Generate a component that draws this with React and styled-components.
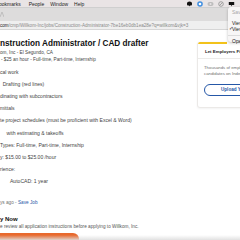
import React from "react";
import styled, { createGlobalStyle } from "styled-components";

const GlobalStyle = createGlobalStyle`
  html, body { margin: 0; padding: 0; background: #fff; }
  body { font-family: "Liberation Sans", Arial, sans-serif; overflow: hidden; }
`;

const Root = styled.div`
  position: relative;
  width: 240px;
  height: 240px;
  overflow: hidden;
  display: flex;
  flex-direction: column;
  &::after {
    content: "";
    position: absolute;
    left: 0;
    right: 0;
    bottom: 0;
    height: 5px;
    background: linear-gradient(to bottom, rgba(230,230,230,0), rgba(222,222,222,0.9));
    pointer-events: none;
  }
`;

const MenuBar = styled.div`
  height: 7px;
  flex-shrink: 0;
  background: #e9e4e5;
  display: flex;
  align-items: center;
  font-size: 5px;
  color: #1c1c1c;
  white-space: nowrap;
`;

const MenuItem = styled.span`
  margin-right: 6px;
  &:first-child { margin-left: -1px; margin-right: 8px; }
`;

const StatusIcons = styled.div`
  margin-left: auto;
  display: flex;
  align-items: center;
  gap: 4px;
  padding-right: 5px;
`;

const TabStrip = styled.div`
  height: 14px;
  flex-shrink: 0;
  background: #dddcdc;
  border-top: 1px solid #cfcfcf;
  box-sizing: border-box;
  display: flex;
  align-items: center;
`;

const UrlRow = styled.div`
  height: 9px;
  flex-shrink: 0;
  background: #efefef;
  border-bottom: 1px solid #d6d6d6;
  box-sizing: border-box;
  display: flex;
  align-items: center;
  font-size: 4.6px;
  color: #8a8a8a;
  white-space: nowrap;
`;

const Host = styled.span`
  color: #222;
`;

const Page = styled.div`
  flex: 1;
  display: flex;
  min-height: 0;
`;

const Main = styled.div`
  flex: 0 0 197px;
  padding-top: 9px;
  color: #444;
  white-space: nowrap;
`;

const Title = styled.h1`
  margin: 0;
  font-size: 8.2px;
  line-height: 10px;
  font-weight: 700;
  color: #111;
`;

const Meta = styled.div`
  font-size: 4.7px;
  line-height: 7px;
  padding-left: ${(p) => p.$indent || 0}px;
  margin-top: ${(p) => p.$gap || 0}px;
  color: ${(p) => p.$color || "#444"};
`;

const List = styled.div`
  margin-top: 2.5px;
`;

const Item = styled.div`
  font-size: 5.05px;
  line-height: 12.2px;
  padding-left: ${(p) => p.$indent || 0}px;
`;

const Link = styled.span`
  color: #2557a7;
`;

const ApplyHead = styled.div`
  margin-top: 9px;
  font-size: 6px;
  line-height: 8px;
  font-weight: 700;
  color: #111;
`;

const ApplyButton = styled.div`
  margin-top: 3.5px;
  width: 79px;
  height: 12px;
  background: #e8692d;
  border-radius: 0 6px 0 0;
`;

const Sidebar = styled.div`
  flex: 0 0 80px;
  padding-top: 12px;
`;

const Card = styled.div`
  position: relative;
  width: 70px;
  height: 66px;
  border: 1px solid #ebe9e7;
  border-top: none;
  border-radius: 3px;
  box-sizing: border-box;
  box-shadow: 0 0.5px 2px rgba(0,0,0,0.05);
  overflow: hidden;
`;

const CardAccent = styled.div`
  width: 29px;
  height: 2px;
  background: #f2c21b;
`;

const CardHead = styled.div`
  padding: 5px 0 0 7px;
  height: 14.5px;
  box-sizing: border-box;
  font-size: 4.4px;
  line-height: 6px;
  font-weight: 700;
  color: #222;
  border-bottom: 1px solid #ecebe9;
  white-space: nowrap;
`;

const CardText = styled.div`
  padding: 6.5px 0 0 6px;
  font-size: 4.3px;
  line-height: 6px;
  color: #6f6f6f;
  white-space: nowrap;
`;

const OutlineButton = styled.div`
  margin: 6.5px 0 0 6px;
  height: 12px;
  width: 70px;
  box-sizing: border-box;
  border: 1px solid #2557a7;
  border-radius: 6px;
  display: flex;
  align-items: center;
  padding-left: 16px;
  font-size: 4.6px;
  font-weight: 700;
  color: #2557a7;
  white-space: nowrap;
`;

const Dropdown = styled.div`
  position: absolute;
  left: 228px;
  top: 7px;
  width: 40px;
  height: 35px;
  background: #f7f6f6;
  border-radius: 3px;
  box-shadow: 0 1px 3px rgba(0,0,0,0.25);
  padding-top: 2px;
  box-sizing: border-box;
  font-size: 5px;
  color: #222;
`;

const DropItem = styled.div`
  height: ${(p) => p.$h || 6.5}px;
  line-height: ${(p) => p.$h || 6.5}px;
  padding-left: 4px;
  position: relative;
  color: ${(p) => (p.$muted ? "#a8a8a8" : "#222")};
`;

const Check = styled.span`
  position: absolute;
  left: 0.5px;
  font-size: 4.5px;
`;

const DropSep = styled.div`
  height: 1px;
  margin: 2px 0;
  background: #dcdcdc;
`;

function StatusGlyphs() {
  return (
    <StatusIcons>
      <svg width="7" height="6" viewBox="0 0 7 6">
        <path d="M1 2.2 Q1 0.6 3.5 0.6 Q6 0.6 6 2.2 L6 3.4 Q6 4.6 4 4.6 L3.5 5.6 L3 4.6 Q1 4.6 1 3.4 Z" fill="#111" />
      </svg>
      <svg width="6" height="6" viewBox="0 0 6 6">
        <circle cx="3" cy="3" r="2.8" fill="#3f8ee0" />
        <circle cx="3" cy="3" r="1.3" fill="#fff" />
      </svg>
      <svg width="7" height="6" viewBox="0 0 7 6">
        <rect x="0.5" y="1" width="6" height="4" rx="2" fill="#bdbdbd" />
        <circle cx="3.5" cy="3" r="1" fill="#e9e4e5" />
      </svg>
      <svg width="6" height="6" viewBox="0 0 6 6">
        <circle cx="3" cy="3" r="2.3" fill="none" stroke="#9a9a9a" strokeWidth="0.9" />
        <path d="M1.4 4.6 L4.6 1.4" stroke="#9a9a9a" strokeWidth="0.9" />
      </svg>
      <svg width="7" height="6" viewBox="0 0 7 6">
        <path d="M0.8 1 L6.2 1 L6.2 4 L4 4 L3.5 5.4 L3 4 L0.8 4 Z" fill="#111" />
      </svg>
    </StatusIcons>
  );
}

export default function App() {
  return (
    <>
      <GlobalStyle />
      <Root>
        <MenuBar>
          <MenuItem>ookmarks</MenuItem>
          <MenuItem>People</MenuItem>
          <MenuItem>Window</MenuItem>
          <MenuItem>Help</MenuItem>
          <StatusGlyphs />
        </MenuBar>
        <TabStrip>
          <svg width="4" height="7" viewBox="0 0 4 7">
            <path d="M0 6 L2 1 L4 6" fill="none" stroke="#b8b8b8" strokeWidth="0.8" />
          </svg>
        </TabStrip>
        <UrlRow>
          <Host>com</Host>/cmp/Willkom-Inc/jobs/Construction-Administrator-7be16eb0db1ea28e?q=willkom&amp;vjk=3
        </UrlRow>
        <Page>
          <Main>
            <Title>nstruction Administrator / CAD drafter</Title>
            <Meta>om, Inc - El Segundo, CA</Meta>
            <Meta $indent={1}>- $25 an hour - Full-time, Part-time, Internship</Meta>
            <List>
              <Item>cal work</Item>
              <Item $indent={2.7}>Drafting (red lines)</Item>
              <Item>dinating with subcontractors</Item>
              <Item>mittals</Item>
              <Item>te project schedules (must be proficient with Excel &amp; Word)</Item>
              <Item $indent={6.5}>with estimating &amp; takeoffs</Item>
              <Item>Types: Full-time, Part-time, Internship</Item>
              <Item>y: $15.00 to $25.00 /hour</Item>
              <Item>rience:</Item>
              <Item $indent={10}>AutoCAD: 1 year</Item>
            </List>
            <Meta $gap={11.4} $color="#6f6f6f">
              ys ago - <Link>Save Job</Link>
            </Meta>
            <ApplyHead>y Now</ApplyHead>
            <Meta $color="#555">e review all application instructions before applying to Willkom, Inc.</Meta>
            <ApplyButton />
          </Main>
          <Sidebar>
            <Card>
              <CardAccent />
              <CardHead>Let Employers Find You</CardHead>
              <CardText>
                Thousands of employers search for
                <br />
                candidates on Indeed
              </CardText>
              <OutlineButton>Upload Your Resume</OutlineButton>
            </Card>
          </Sidebar>
        </Page>
        <Dropdown>
          <DropItem $muted>Save</DropItem>
          <DropItem $h={4} />
          <DropItem>View</DropItem>
          <DropItem><Check>✓</Check>View</DropItem>
          <DropSep />
          <DropItem>Open</DropItem>
        </Dropdown>
      </Root>
    </>
  );
}
